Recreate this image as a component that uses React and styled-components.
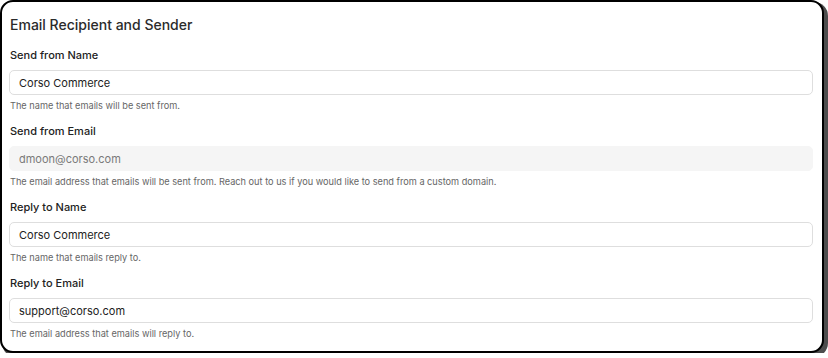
import React from 'react'
import styled, { createGlobalStyle } from 'styled-components'

const Global = createGlobalStyle`
  html, body {
    margin: 0;
    padding: 0;
    background: #ffffff;
  }
  body {
    font-family: Inter, "Noto Sans", "Liberation Sans", sans-serif;
    -webkit-font-smoothing: antialiased;
  }
`

const fields = [
    { label: 'Send from Name', value: 'Corso Commerce', help: 'The name that emails will be sent from.' },
    { label: 'Send from Email', value: 'dmoon@corso.com', help: 'The email address that emails will be sent from. Reach out to us if you would like to send from a custom domain.', disabled: true },
    { label: 'Reply to Name', value: 'Corso Commerce', help: 'The name that emails reply to.' },
    { label: 'Reply to Email', value: 'support@corso.com', help: 'The email address that emails will reply to.' },
]

function App() {
    return (
        <>
            <Global />
            <Card>
                <Title>Email Recipient and Sender</Title>
                {fields.map(f => (
                    <Field key={f.label}>
                        <Label>{f.label}</Label>
                        <Input defaultValue={f.value} disabled={f.disabled} $disabled={f.disabled} />
                        <Help>{f.help}</Help>
                    </Field>
                ))}
            </Card>
        </>
    )
}

export default App

const Card = styled.div`
  box-sizing: border-box;
  width: 824px;
  height: 353px;
  border: 2px solid #000;
  border-radius: 13px;
  box-shadow: 3px 3px 0 1px #4d4d4d;
  background: #fff;
  padding: 13px 9px 0 7px;
  display: flex;
  flex-direction: column;
`
const Title = styled.h1`
  margin: 0 0 1px 1px;
  font-size: 14px;
  font-weight: 500;
  color: #2b2b2b;
  line-height: 20px;
`
const Field = styled.div`
  display: flex;
  flex-direction: column;
  margin-top: 11px;
`
const Label = styled.label`
  font-size: 11px;
  font-weight: 500;
  color: #222;
  line-height: 16px;
  margin-left: 1px;
`
const Input = styled.input`
  box-sizing: border-box;
  margin-top: 7px;
  height: 25px;
  width: 100%;
  border: 1px solid ${p => (p.$disabled ? '#f5f5f5' : '#dedede')};
  background: ${p => (p.$disabled ? '#f5f5f5' : '#fff')};
  border-radius: 5px;
  padding: 0 9px;
  font-family: inherit;
  font-size: 11px;
  color: ${p => (p.$disabled ? '#7a7a7a' : '#222')};
  outline: none;
`
const Help = styled.div`
  margin-top: 5px;
  margin-left: 1px;
  font-size: 9.2px;
  color: #666;
  line-height: 12px;
`
